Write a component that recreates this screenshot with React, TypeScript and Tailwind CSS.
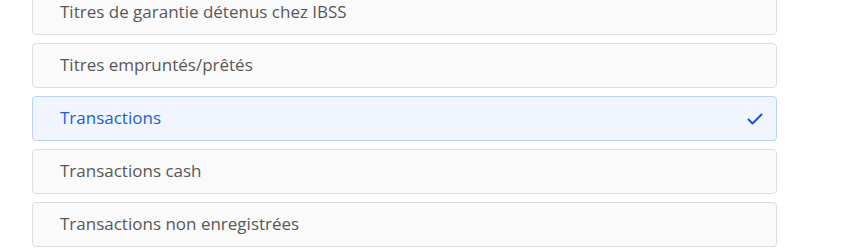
import React from "react";

const items = [
  "Titres de garantie détenus chez IBSS",
  "Titres empruntés/prêtés",
  "Transactions",
  "Transactions cash",
  "Transactions non enregistrées",
];

export default function App() {
  return (
    <div className="w-[858px] h-[252px] overflow-hidden bg-white" style={{ fontFamily: "'Open Sans', sans-serif" }}>
      <div className="-mt-[10px] ml-[32px] w-[745px] flex flex-col gap-[8px]">
        {items.map((t) => {
          const sel = t === "Transactions";
          return (
            <div
              key={t}
              className={
                sel
                  ? "h-[45px] rounded-[4px] border border-[#bdd3f6] bg-[#f1f6fe] flex items-center justify-between pl-[27px] pr-[12px]"
                  : "h-[45px] rounded-[4px] border border-[#dedede] bg-[#fafafa] flex items-center justify-between pl-[27px] pr-[12px]"
              }
            >
              <span className={sel ? "text-[17px] leading-[20px] -mt-[2px] text-[#1b5fd9]" : "text-[17px] leading-[20px] -mt-[2px] text-[#585858]"}>{t}</span>
              {sel && (
                <svg width="18" height="18" viewBox="0 0 18 18" fill="none">
                  <path d="M2.5 9.5 L6.5 13.5 L15.5 4.5" stroke="#1b55d6" strokeWidth="2" strokeLinecap="round" strokeLinejoin="round" />
                </svg>
              )}
            </div>
          );
        })}
      </div>
    </div>
  );
}
